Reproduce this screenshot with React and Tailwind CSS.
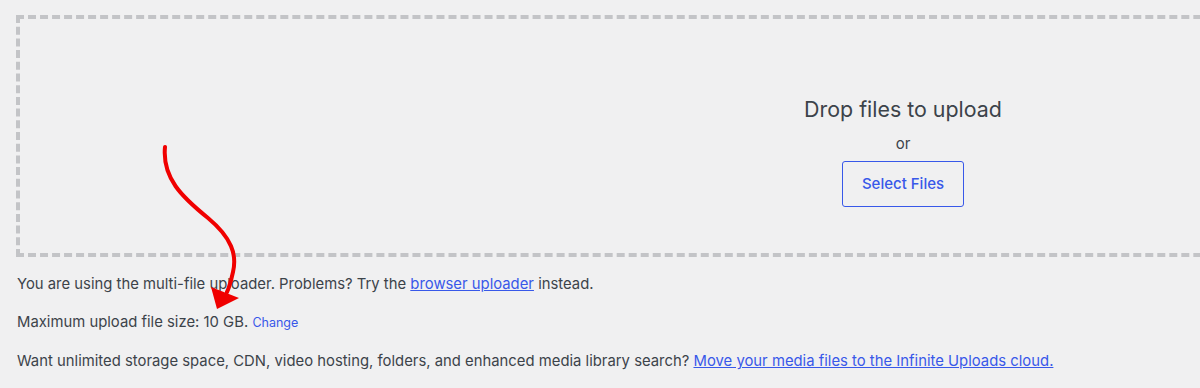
export default function App() {
  return (
    <div className="h-[388px] w-[1200px] overflow-hidden bg-[#f0f0f1] text-[#3c434a] font-['Inter',Arial,sans-serif] relative">
      {/* Drop zone */}
      <div className="ml-4 mt-[15px] w-[1774px] h-[242px] border-4 border-dashed border-[#c3c4c7] flex flex-col items-center pt-[76px]">
        <p className="text-[21.4px] leading-[28px]">Drop files to upload</p>
        <p className="mt-[10px] text-[15px] leading-[22px]">or</p>
        <button className="mt-[6px] w-[122px] h-[46px] rounded-[3px] border border-[#3858e9] text-[#3858e9] text-[15px] font-medium">
          Select Files
        </button>
      </div>

      {/* Info lines */}
      <div className="pl-[17px] pt-[17px] text-[14.85px] leading-[20px] flex flex-col gap-[18px]">
        <p>
          You are using the multi-file uploader. Problems? Try the{" "}
          <a href="#" className="text-[#3858e9] underline">browser uploader</a> instead.
        </p>
        <p>
          Maximum upload file size: 10 GB.{" "}
          <a href="#" className="text-[#3858e9] text-[12.5px]">Change</a>
        </p>
        <p>
          Want unlimited storage space, CDN, video hosting, folders, and enhanced media library search?{" "}
          <a href="#" className="text-[#3858e9] underline">Move your media files to the Infinite Uploads cloud.</a>
        </p>
      </div>

      {/* Annotation arrow */}
      <svg className="absolute left-0 top-0 pointer-events-none" width="1200" height="388" viewBox="0 0 1200 388">
        <path
          d="M165 147 C162 178 182 197 208 218 C232 238 237 255 233 272 C231 281 229 288 227 292"
          fill="none"
          stroke="#f00000"
          strokeWidth="4"
          strokeLinecap="round"
        />
        <polygon points="211,287 239,298 217,309" fill="#f00000" />
      </svg>
    </div>
  );
}
